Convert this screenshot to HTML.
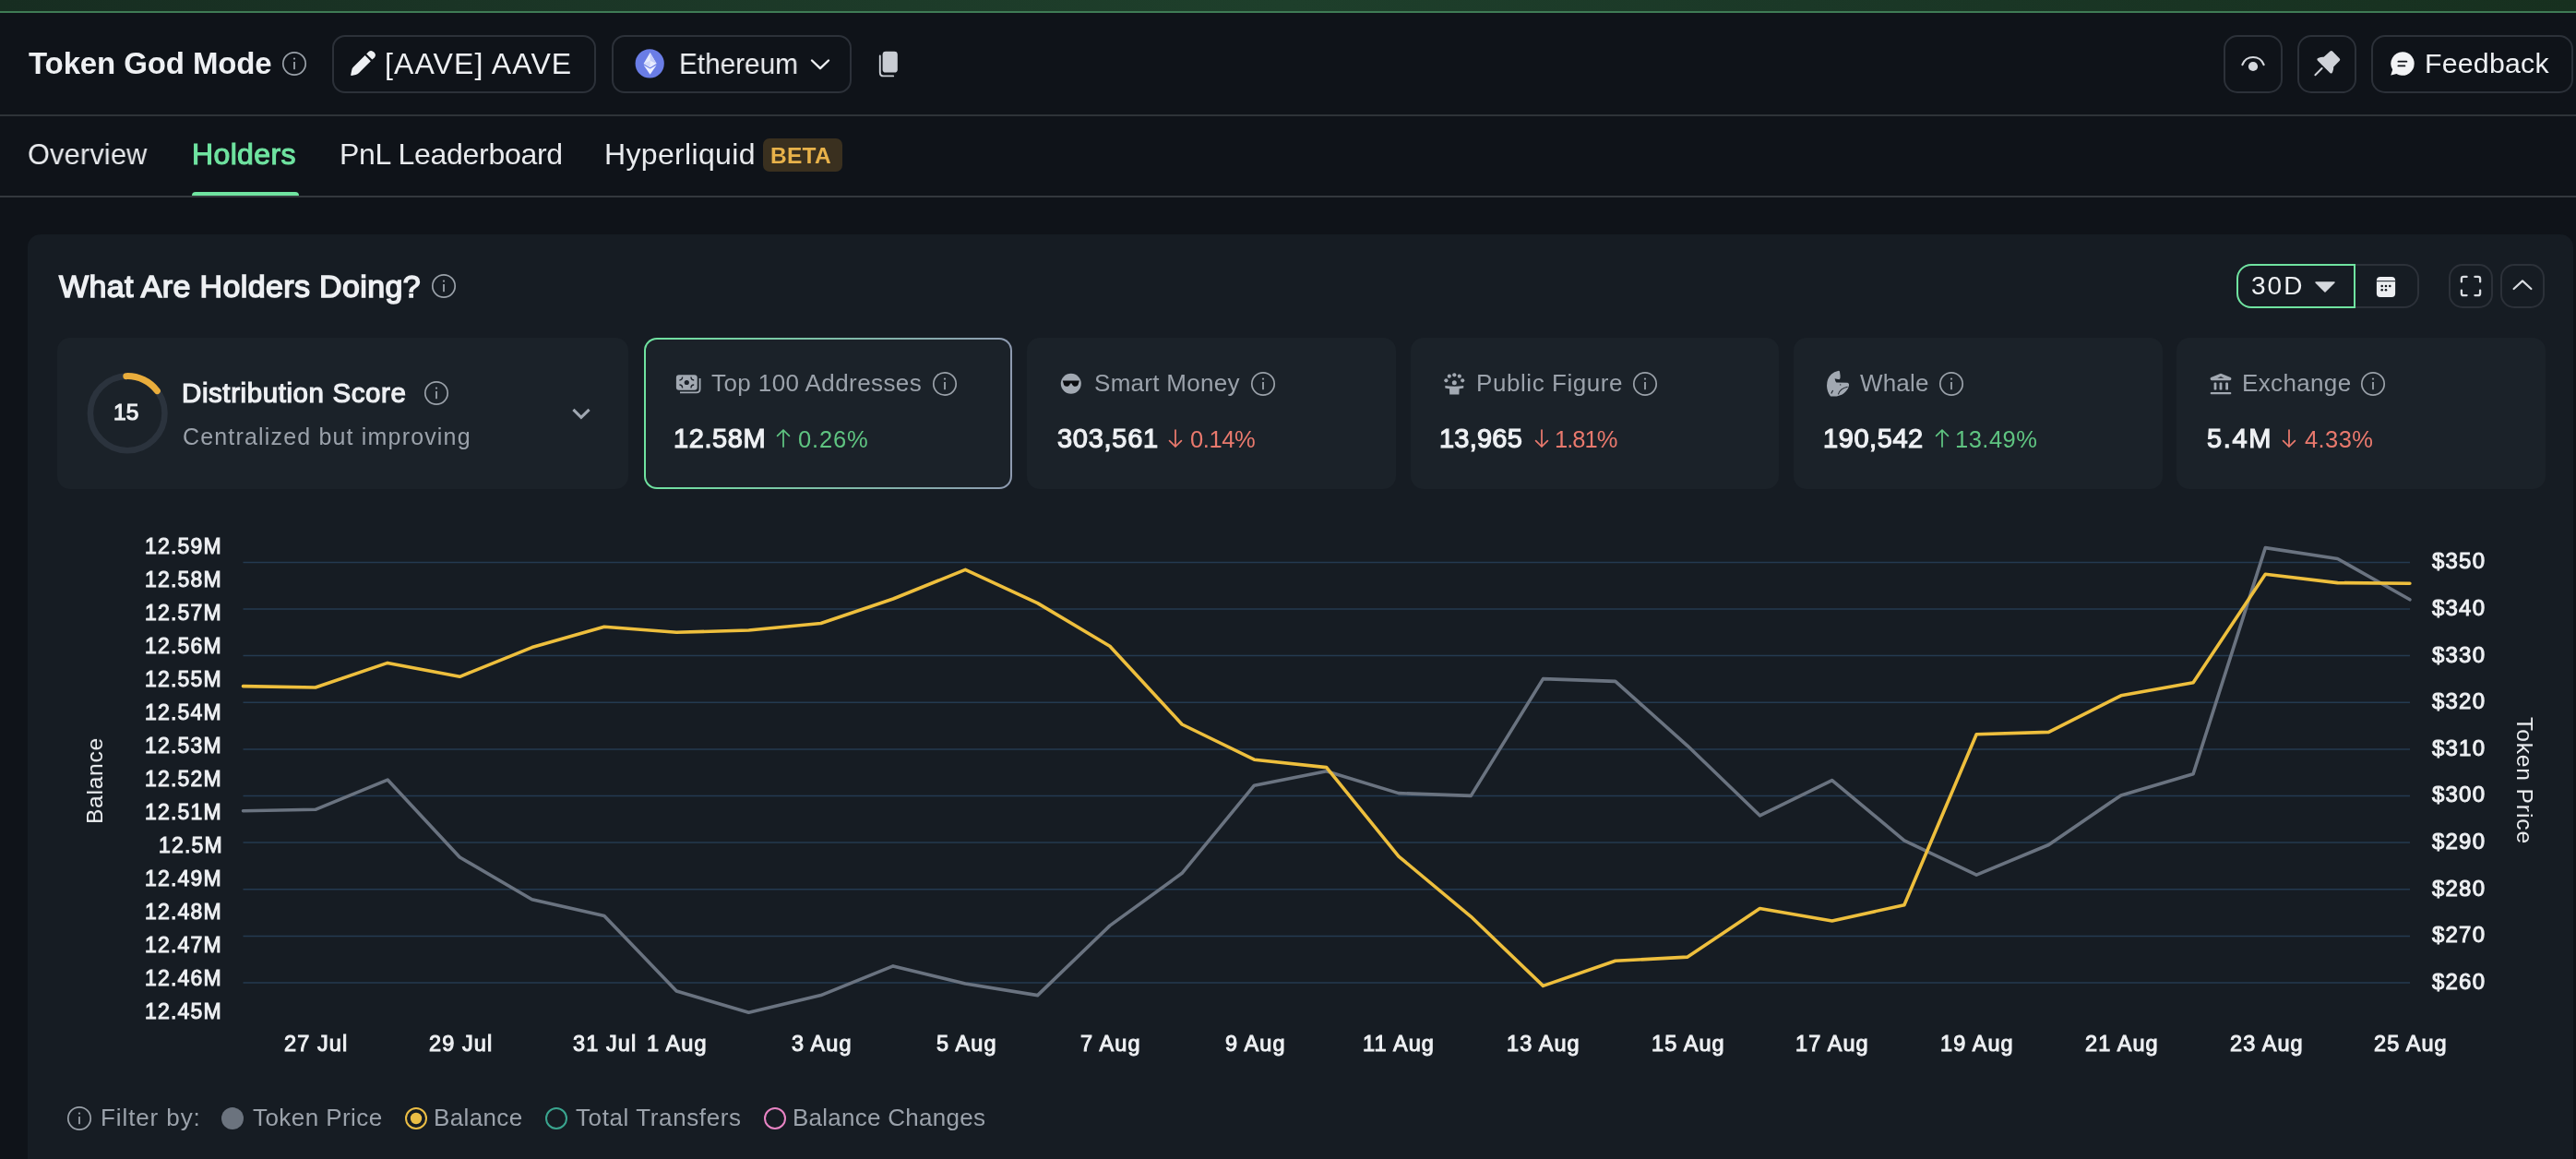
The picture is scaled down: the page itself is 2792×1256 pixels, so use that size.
<!DOCTYPE html>
<html><head><meta charset="utf-8"><title>Token God Mode</title>
<style>
html,body{margin:0;padding:0;}
body{width:2792px;height:1256px;position:relative;overflow:hidden;background:#0f1319;font-family:"Liberation Sans", sans-serif;}
.t{position:absolute;white-space:nowrap;line-height:0;font-family:"Liberation Sans", sans-serif;will-change:transform;}
</style></head><body>
<div style="position:absolute;left:0px;top:0px;width:2792px;height:12px;box-sizing:border-box;background:linear-gradient(90deg,#172d21 0%,#1d3b29 35%,#1e3f2b 50%,#1b3827 70%,#17301f 100%)"></div>
<div style="position:absolute;left:0px;top:12px;width:2792px;height:2px;box-sizing:border-box;background:#3f7b55"></div>
<div class="t" style="left:31.00px;top:68.57px;font-size:33px;font-weight:700;color:#eef0f3;letter-spacing:-0.115px;">Token God Mode</div>
<svg style="position:absolute;left:303.5px;top:53.8px;overflow:visible" width="30" height="30" viewBox="0 0 30 30"><circle cx="15" cy="15" r="12.2" fill="none" stroke="#9aa1a9" stroke-width="1.7"/><rect x="14.1" y="13" width="1.8" height="8.2" fill="#9aa1a9"/><circle cx="15" cy="9.6" r="1.15" fill="#9aa1a9"/></svg>
<div style="position:absolute;left:359.5px;top:37.5px;width:286.0px;height:63.5px;box-sizing:border-box;border:2px solid #2c3139;border-radius:14px"></div>
<svg style="position:absolute;left:370px;top:45px;overflow:visible" width="50" height="50" viewBox="0 0 50 50"><path d="M12.6 28 L25.6 15 L31.8 21.2 L18.8 34.2 Q17.6 35.4 15.6 35.9 L11 36.9 Q10 37.1 10.2 36.1 L11.2 31.2 Q11.6 29 12.6 28 Z" fill="#eef0f3"/><path d="M27.2 13.4 L29.6 11 Q32.4 8.6 35.2 11.4 L35.6 11.8 Q38.2 14.6 35.8 17.4 L33.4 19.6 Z" fill="#eef0f3"/></svg>
<div class="t" style="left:417.00px;top:68.61px;font-size:32px;font-weight:400;color:#eef0f3;letter-spacing:1.130px;">[AAVE] AAVE</div>
<div style="position:absolute;left:662.5px;top:37.5px;width:260.5px;height:63.5px;box-sizing:border-box;border:2px solid #2c3139;border-radius:14px"></div>
<svg style="position:absolute;left:688px;top:53px;overflow:visible" width="32" height="32" viewBox="0 0 32 32"><circle cx="16.2" cy="15.9" r="15.6" fill="#6a7de6"/><path d="M16.6 4.1 L23.6 16 L16.6 20.2 L9.6 16 Z" fill="#e8ecff"/><path d="M16.6 4.1 L23.6 16 L16.6 12.8 Z" fill="#c6cff8"/><path d="M9.6 16 L16.6 12.8 L16.6 20.2 Z" fill="#d2d9fb"/><path d="M9.6 17.5 L16.6 21.6 L23.6 17.5 L16.6 27.8 Z" fill="#eef1ff"/></svg>
<div class="t" style="left:735.74px;top:68.61px;font-size:32px;font-weight:400;color:#eef0f3;letter-spacing:-0.023px;transform:scaleX(0.93);transform-origin:0 0;">Ethereum</div>
<svg style="position:absolute;left:877px;top:62px;overflow:visible" width="24" height="16" viewBox="0 0 24 16"><path d="M3 3.5 L12 12.2 L21 3.5" fill="none" stroke="#eef0f3" stroke-width="2.4" stroke-linecap="round" stroke-linejoin="round"/></svg>
<svg style="position:absolute;left:950px;top:54px;overflow:visible" width="28" height="32" viewBox="0 0 28 32"><rect x="6.6" y="1.8" width="16.2" height="22.8" rx="3.4" fill="#c9cdd4"/><path d="M3.8 6.4 L3.8 24.4 Q3.8 28.4 7.8 28.4 L18.2 28.4" fill="none" stroke="#c9cdd4" stroke-width="1.9" stroke-linecap="round"/></svg>
<div style="position:absolute;left:2410px;top:37.5px;width:64px;height:63.5px;box-sizing:border-box;border:2px solid #2c3139;border-radius:15px"></div>
<svg style="position:absolute;left:2426px;top:53px;overflow:visible" width="32" height="32" viewBox="0 0 32 32"><path d="M4.4 17.2 A12.3 12.3 0 0 1 27.6 17.2" fill="none" stroke="#d5d8dd" stroke-width="2.2" stroke-linecap="round"/><circle cx="16" cy="19" r="5.1" fill="#d5d8dd"/></svg>
<div style="position:absolute;left:2490px;top:37.5px;width:64px;height:63.5px;box-sizing:border-box;border:2px solid #2c3139;border-radius:15px"></div>
<svg style="position:absolute;left:2506px;top:53px;overflow:visible" width="34" height="32" viewBox="0 0 34 32"><path d="M19.6 2.6 Q20.8 1.6 22 2.6 L29.8 10.4 Q30.8 11.6 29.8 12.8 L23.2 19.4 Q23.4 22.4 22.2 25 Q21.4 27.4 19.6 26.2 L5.8 12.4 Q4.6 10.6 7 9.8 Q9.6 8.6 12.6 8.8 Z" fill="#cfd2d8"/><path d="M3.4 28.2 L10.6 21" stroke="#cfd2d8" stroke-width="2" stroke-linecap="round"/></svg>
<div style="position:absolute;left:2570px;top:37.5px;width:218.5px;height:63.5px;box-sizing:border-box;border:2px solid #2c3139;border-radius:15px"></div>
<svg style="position:absolute;left:2588px;top:54px;overflow:visible" width="32" height="32" viewBox="0 0 32 32"><path d="M16 2.2 A12.8 12.8 0 1 1 9.4 26 L3.6 27.6 Q3 27.6 3.4 27 L5.2 21.6 A12.8 12.8 0 0 1 16 2.2 Z" fill="#f2f3f5"/><path d="M11.4 12.7 L20.4 12.7 M11.4 17.4 L18.4 17.4" stroke="#0f1319" stroke-width="1.8" stroke-linecap="round"/></svg>
<div class="t" style="left:2627.50px;top:68.80px;font-size:30.3px;font-weight:400;color:#eef0f3;letter-spacing:0.214px;">Feedback</div>
<div style="position:absolute;left:0px;top:124px;width:2792px;height:2px;box-sizing:border-box;background:#2e3338"></div>
<div class="t" style="left:30.04px;top:167.31px;font-size:32px;font-weight:400;color:#e9ebee;letter-spacing:0.196px;transform:scaleX(0.96);transform-origin:0 0;">Overview</div>
<div class="t" style="left:207.80px;top:167.31px;font-size:32px;font-weight:400;color:#6fe3a0;letter-spacing:0.367px;-webkit-text-stroke:1.1px #6fe3a0;">Holders</div>
<div style="position:absolute;left:208px;top:207.5px;width:115.5px;height:5.5px;box-sizing:border-box;background:#6fe3a0;border-radius:4px 4px 0 0"></div>
<div class="t" style="left:367.70px;top:167.31px;font-size:32px;font-weight:400;color:#e9ebee;letter-spacing:-0.286px;">PnL Leaderboard</div>
<div class="t" style="left:655.00px;top:167.31px;font-size:32px;font-weight:400;color:#e9ebee;letter-spacing:0.340px;">Hyperliquid</div>
<div style="position:absolute;left:826.5px;top:150px;width:86.0px;height:36px;box-sizing:border-box;background:#3a301f;border-radius:7px"></div>
<div class="t" style="left:834.80px;top:169.01px;font-size:24.5px;font-weight:700;color:#e8b24a;letter-spacing:0.267px;">BETA</div>
<div style="position:absolute;left:0px;top:212px;width:2792px;height:2px;box-sizing:border-box;background:#33383d"></div>
<div style="position:absolute;left:29.5px;top:253.5px;width:2759.5px;height:1042.5px;box-sizing:border-box;background:#161c23;border-radius:14px"></div>
<div class="t" style="left:64.00px;top:309.72px;font-size:34px;font-weight:400;color:#eef0f3;letter-spacing:0.364px;-webkit-text-stroke:1.5px #eef0f3;">What Are Holders Doing?</div>
<svg style="position:absolute;left:466px;top:295px;overflow:visible" width="30" height="30" viewBox="0 0 30 30"><circle cx="15" cy="15" r="12.2" fill="none" stroke="#9aa1a9" stroke-width="1.7"/><rect x="14.1" y="13" width="1.8" height="8.2" fill="#9aa1a9"/><circle cx="15" cy="9.6" r="1.15" fill="#9aa1a9"/></svg>
<div style="position:absolute;left:2424px;top:286px;width:197.5px;height:48px;box-sizing:border-box;border:2px solid #2c3139;border-radius:16px"></div>
<div style="position:absolute;left:2424px;top:286px;width:128.5px;height:48px;box-sizing:border-box;border:2.4px solid #6fe3a0;border-radius:16px 0 0 16px"></div>
<div class="t" style="left:2440.40px;top:309.70px;font-size:28px;font-weight:400;color:#eef0f3;letter-spacing:2.000px;">30D</div>
<svg style="position:absolute;left:2508px;top:304px;overflow:visible" width="24" height="14" viewBox="0 0 24 14"><path d="M2 2 L22 2 L12 12 Z" fill="#d5d8dd" stroke="#d5d8dd" stroke-width="1.5" stroke-linejoin="round"/></svg>
<svg style="position:absolute;left:2574px;top:298px;overflow:visible" width="24" height="24" viewBox="0 0 24 24"><rect x="1.9" y="2" width="20.2" height="21.9" rx="4" fill="#eceef1"/><rect x="1.9" y="6" width="20.2" height="1.2" fill="#3a4047"/><circle cx="7.7" cy="12" r="1.3" fill="#14181d"/><circle cx="12" cy="12" r="1.3" fill="#14181d"/><circle cx="16.3" cy="12" r="1.3" fill="#14181d"/><circle cx="7.7" cy="16.2" r="1.3" fill="#14181d"/><circle cx="12" cy="16.2" r="1.3" fill="#14181d"/></svg>
<div style="position:absolute;left:2654px;top:286px;width:48px;height:48px;box-sizing:border-box;border:2px solid #2c3139;border-radius:15px"></div>
<svg style="position:absolute;left:2664px;top:296px;overflow:visible" width="28" height="28" viewBox="0 0 28 28"><path d="M3.9 9.4 L3.9 6.1 Q3.9 3.9 6.1 3.9 L9.6 3.9 M18.4 3.9 L21.9 3.9 Q24.1 3.9 24.1 6.1 L24.1 9.4 M24.1 18.6 L24.1 21.9 Q24.1 24.1 21.9 24.1 L18.4 24.1 M9.6 24.1 L6.1 24.1 Q3.9 24.1 3.9 21.9 L3.9 18.6" fill="none" stroke="#d9dce1" stroke-width="2.3" stroke-linecap="round"/></svg>
<div style="position:absolute;left:2710px;top:286px;width:48px;height:48px;box-sizing:border-box;border:2px solid #2c3139;border-radius:15px"></div>
<svg style="position:absolute;left:2720px;top:296px;overflow:visible" width="28" height="28" viewBox="0 0 28 28"><path d="M4.6 17 L14 8.4 L23.4 17" fill="none" stroke="#d9dce1" stroke-width="2.2" stroke-linecap="round" stroke-linejoin="round"/></svg>
<div style="position:absolute;left:61.5px;top:365.5px;width:619.5px;height:164.5px;box-sizing:border-box;background:#1b2229;border-radius:14px"></div>
<svg style="position:absolute;left:90px;top:400px;overflow:visible" width="96" height="96" viewBox="0 0 96 96"><circle cx="48.2" cy="47.9" r="40.3" fill="none" stroke="#2b333d" stroke-width="6.6"/><path d="M46.8 7.63 A40.3 40.3 0 0 1 80.4 23.65" fill="none" stroke="#e9ad3c" stroke-width="7" stroke-linecap="round"/></svg>
<div class="t" style="left:123.40px;top:447.21px;font-size:24.5px;font-weight:400;color:#eef0f3;letter-spacing:0.200px;-webkit-text-stroke:1.1px #eef0f3;">15</div>
<div class="t" style="left:196.90px;top:425.58px;font-size:29.5px;font-weight:400;color:#eef0f3;letter-spacing:0.588px;-webkit-text-stroke:1.2px #eef0f3;">Distribution Score</div>
<svg style="position:absolute;left:457.5px;top:410.9px;overflow:visible" width="30" height="30" viewBox="0 0 30 30"><circle cx="15" cy="15" r="12.2" fill="none" stroke="#9aa1a9" stroke-width="1.7"/><rect x="14.1" y="13" width="1.8" height="8.2" fill="#9aa1a9"/><circle cx="15" cy="9.6" r="1.15" fill="#9aa1a9"/></svg>
<div class="t" style="left:197.90px;top:473.04px;font-size:25px;font-weight:400;color:#9ba2ab;letter-spacing:1.171px;">Centralized but improving</div>
<svg style="position:absolute;left:618px;top:440px;overflow:visible" width="24" height="16" viewBox="0 0 24 16"><path d="M3.4 3.8 L11.9 12.4 L20.6 3.8" fill="none" stroke="#9fa7b1" stroke-width="3.1" stroke-linecap="butt" stroke-linejoin="miter"/></svg>
<div style="position:absolute;left:698px;top:365.5px;width:399px;height:164.5px;box-sizing:border-box;border-radius:14px;padding:2px;background:linear-gradient(90deg,#6fe3a0,#8e9ab0)"><div style="width:100%;height:100%;border-radius:12px;background:#1b2229"></div></div>
<div style="position:absolute;left:1113px;top:365.5px;width:399.5px;height:164.5px;box-sizing:border-box;background:#1b2229;border-radius:14px"></div>
<div style="position:absolute;left:1528.5px;top:365.5px;width:399.5px;height:164.5px;box-sizing:border-box;background:#1b2229;border-radius:14px"></div>
<div style="position:absolute;left:1944px;top:365.5px;width:399.5px;height:164.5px;box-sizing:border-box;background:#1b2229;border-radius:14px"></div>
<div style="position:absolute;left:2358.5px;top:365.5px;width:400.0px;height:164.5px;box-sizing:border-box;background:#1b2229;border-radius:14px"></div>
<svg style="position:absolute;left:731px;top:403px;overflow:visible" width="30" height="26" viewBox="0 0 30 26"><rect x="1.9" y="3.2" width="22.8" height="16.6" rx="3" fill="#a2a9b2"/><path d="M6 22.4 L23.8 22.4 Q27.6 22.4 27.6 18.6 L27.6 7" fill="none" stroke="#a2a9b2" stroke-width="1.8"/><circle cx="13.3" cy="11.5" r="2.6" fill="#1b2129"/><path d="M5.4 9 Q8.6 9 8.6 5.6 M18 5.6 Q18 9 21.2 9 M5.4 14 Q8.6 14 8.6 17.4 M18 17.4 Q18 14 21.2 14" fill="none" stroke="#1b2129" stroke-width="1.4"/></svg>
<div class="t" style="left:771.20px;top:415.19px;font-size:26px;font-weight:400;color:#9ba2ab;letter-spacing:0.412px;">Top 100 Addresses</div>
<svg style="position:absolute;left:1009px;top:400.5px;overflow:visible" width="30" height="30" viewBox="0 0 30 30"><circle cx="15" cy="15" r="12.2" fill="none" stroke="#9aa1a9" stroke-width="1.7"/><rect x="14.1" y="13" width="1.8" height="8.2" fill="#9aa1a9"/><circle cx="15" cy="9.6" r="1.15" fill="#9aa1a9"/></svg>
<div class="t" style="left:729.70px;top:475.35px;font-size:29px;font-weight:400;color:#eef0f3;letter-spacing:0.580px;-webkit-text-stroke:1.2px #eef0f3;">12.58M</div>
<div class="t" style="left:865.00px;top:475.66px;font-size:25.5px;font-weight:400;color:#5fc481;letter-spacing:0.825px;">0.26%</div>
<svg style="position:absolute;left:1148px;top:403px;overflow:visible" width="26" height="26" viewBox="0 0 26 26"><circle cx="12.8" cy="12.7" r="11" fill="#a2a9b2"/><path d="M3.8 9.6 L21.8 9.6 L20.9 12.8 Q20.4 15.8 17.6 15.8 Q14.6 15.8 13.6 12.4 L12 12.4 Q11 15.8 8 15.8 Q5.2 15.8 4.7 12.8 Z" fill="#0b0d10"/></svg>
<div class="t" style="left:1185.50px;top:415.19px;font-size:26px;font-weight:400;color:#9ba2ab;letter-spacing:0.300px;">Smart Money</div>
<svg style="position:absolute;left:1354px;top:400.5px;overflow:visible" width="30" height="30" viewBox="0 0 30 30"><circle cx="15" cy="15" r="12.2" fill="none" stroke="#9aa1a9" stroke-width="1.7"/><rect x="14.1" y="13" width="1.8" height="8.2" fill="#9aa1a9"/><circle cx="15" cy="9.6" r="1.15" fill="#9aa1a9"/></svg>
<div class="t" style="left:1146.20px;top:475.35px;font-size:29px;font-weight:400;color:#eef0f3;letter-spacing:0.717px;-webkit-text-stroke:1.2px #eef0f3;">303,561</div>
<div class="t" style="left:1289.70px;top:475.66px;font-size:25.5px;font-weight:400;color:#e9796d;letter-spacing:-0.425px;">0.14%</div>
<svg style="position:absolute;left:1563.8px;top:403.2px;overflow:visible" width="26" height="26" viewBox="0 0 26 26"><circle cx="3.4" cy="9.3" r="2.1" fill="#a2a9b2"/><circle cx="6.8" cy="4.7" r="2.1" fill="#a2a9b2"/><circle cx="12.3" cy="3.3" r="2.1" fill="#a2a9b2"/><circle cx="17.8" cy="4.7" r="2.1" fill="#a2a9b2"/><circle cx="21.2" cy="9.3" r="2.1" fill="#a2a9b2"/><circle cx="12.3" cy="11.7" r="2.5" fill="#a2a9b2"/><path d="M2.4 14.9 Q12.3 16.4 22.2 14.9 L22.3 17.6 Q19.6 18.4 17.6 18.3 L17.4 24.4 L7.2 24.4 L7 18.3 Q5 18.4 2.3 17.6 Z" fill="#a2a9b2"/></svg>
<div class="t" style="left:1599.60px;top:415.19px;font-size:26px;font-weight:400;color:#9ba2ab;letter-spacing:0.567px;">Public Figure</div>
<svg style="position:absolute;left:1768px;top:400.5px;overflow:visible" width="30" height="30" viewBox="0 0 30 30"><circle cx="15" cy="15" r="12.2" fill="none" stroke="#9aa1a9" stroke-width="1.7"/><rect x="14.1" y="13" width="1.8" height="8.2" fill="#9aa1a9"/><circle cx="15" cy="9.6" r="1.15" fill="#9aa1a9"/></svg>
<div class="t" style="left:1560.40px;top:475.35px;font-size:29px;font-weight:400;color:#eef0f3;letter-spacing:0.220px;-webkit-text-stroke:1.2px #eef0f3;">13,965</div>
<div class="t" style="left:1684.80px;top:475.66px;font-size:25.5px;font-weight:400;color:#e9796d;letter-spacing:-1.000px;">1.81%</div>
<svg style="position:absolute;left:1970px;top:395px;overflow:visible" width="50" height="40" viewBox="0 0 50 40"><path d="M22.1 6.9 Q23.8 6.5 24 8 L24.6 12.2 Q25 15 23.4 16.2 L18.6 15.2 Q19.2 18.6 20.3 19.6 L32 19.8 Q34.4 20.2 34 22.8 Q33.4 26.5 31 28.8 Q27.4 33.2 20.7 34.5 L14.1 34.6 Q10.2 30 10 23 Q10 15 15 10.5 Q18 7.8 22.1 6.9 Z" fill="#a2a9b2"/><path d="M22.4 32.4 Q24.2 25.8 32.6 24.2 M14.8 31.6 L16.6 28" fill="none" stroke="#1b2129" stroke-width="1.1"/><circle cx="24.7" cy="21.9" r="0.7" fill="#1b2129"/></svg>
<div class="t" style="left:2016.30px;top:415.19px;font-size:26px;font-weight:400;color:#9ba2ab;letter-spacing:0.175px;">Whale</div>
<svg style="position:absolute;left:2100px;top:400.5px;overflow:visible" width="30" height="30" viewBox="0 0 30 30"><circle cx="15" cy="15" r="12.2" fill="none" stroke="#9aa1a9" stroke-width="1.7"/><rect x="14.1" y="13" width="1.8" height="8.2" fill="#9aa1a9"/><circle cx="15" cy="9.6" r="1.15" fill="#9aa1a9"/></svg>
<div class="t" style="left:1975.90px;top:475.35px;font-size:29px;font-weight:400;color:#eef0f3;letter-spacing:0.567px;-webkit-text-stroke:1.2px #eef0f3;">190,542</div>
<div class="t" style="left:2119.40px;top:475.66px;font-size:25.5px;font-weight:400;color:#5fc481;letter-spacing:0.480px;">13.49%</div>
<svg style="position:absolute;left:2393px;top:402px;overflow:visible" width="28" height="28" viewBox="0 0 28 28"><path d="M2.6 8.6 Q2.4 7.6 3.4 7.1 L13.2 3 Q14 2.7 14.8 3 L24.6 7.1 Q25.6 7.6 25.4 8.6 Q25.2 10.2 24 10.2 L4 10.2 Q2.8 10.2 2.6 8.6 Z" fill="#a2a9b2"/><path d="M10.4 7.8 L14 6 L17.6 7.8 Z" fill="#1b2129"/><rect x="6.6" y="12.4" width="2.8" height="8.2" rx="1.2" fill="#a2a9b2"/><rect x="12.6" y="12.4" width="2.8" height="8.2" rx="1.2" fill="#a2a9b2"/><rect x="19.2" y="12.4" width="2.8" height="8.2" rx="1.2" fill="#a2a9b2"/><rect x="2.7" y="22.9" width="22.6" height="2.3" rx="1" fill="#a2a9b2"/></svg>
<div class="t" style="left:2430.00px;top:415.19px;font-size:26px;font-weight:400;color:#9ba2ab;letter-spacing:0.357px;">Exchange</div>
<svg style="position:absolute;left:2557px;top:400.5px;overflow:visible" width="30" height="30" viewBox="0 0 30 30"><circle cx="15" cy="15" r="12.2" fill="none" stroke="#9aa1a9" stroke-width="1.7"/><rect x="14.1" y="13" width="1.8" height="8.2" fill="#9aa1a9"/><circle cx="15" cy="9.6" r="1.15" fill="#9aa1a9"/></svg>
<div class="t" style="left:2391.80px;top:475.35px;font-size:29px;font-weight:400;color:#eef0f3;letter-spacing:1.667px;-webkit-text-stroke:1.2px #eef0f3;">5.4M</div>
<div class="t" style="left:2498.30px;top:475.66px;font-size:25.5px;font-weight:400;color:#e9796d;letter-spacing:0.400px;">4.33%</div>
<svg style="position:absolute;left:840.2px;top:463.0px;overflow:visible" width="18" height="24" viewBox="0 0 18 24"><path d="M9 21 L9 3 M2.6 9.4 L9 3 L15.4 9.4" fill="none" stroke="#5fc481" stroke-width="1.75" stroke-linecap="round" stroke-linejoin="round"/></svg>
<svg style="position:absolute;left:1264.8px;top:463.0px;overflow:visible" width="18" height="24" viewBox="0 0 18 24"><path d="M9 3 L9 21 M2.6 14.6 L9 21 L15.4 14.6" fill="none" stroke="#e9796d" stroke-width="1.75" stroke-linecap="round" stroke-linejoin="round"/></svg>
<svg style="position:absolute;left:1661.5px;top:463.0px;overflow:visible" width="18" height="24" viewBox="0 0 18 24"><path d="M9 3 L9 21 M2.6 14.6 L9 21 L15.4 14.6" fill="none" stroke="#e9796d" stroke-width="1.75" stroke-linecap="round" stroke-linejoin="round"/></svg>
<svg style="position:absolute;left:2096.2px;top:463.0px;overflow:visible" width="18" height="24" viewBox="0 0 18 24"><path d="M9 21 L9 3 M2.6 9.4 L9 3 L15.4 9.4" fill="none" stroke="#5fc481" stroke-width="1.75" stroke-linecap="round" stroke-linejoin="round"/></svg>
<svg style="position:absolute;left:2471.8px;top:463.0px;overflow:visible" width="18" height="24" viewBox="0 0 18 24"><path d="M9 3 L9 21 M2.6 14.6 L9 21 L15.4 14.6" fill="none" stroke="#e9796d" stroke-width="1.75" stroke-linecap="round" stroke-linejoin="round"/></svg>
<svg style="position:absolute;left:0;top:0" width="2792" height="1256"><line x1="263.5" y1="609.4" x2="2612" y2="609.4" stroke="#243a51" stroke-width="1.5"/><line x1="263.5" y1="660.0" x2="2612" y2="660.0" stroke="#243a51" stroke-width="1.5"/><line x1="263.5" y1="710.6" x2="2612" y2="710.6" stroke="#243a51" stroke-width="1.5"/><line x1="263.5" y1="761.3" x2="2612" y2="761.3" stroke="#243a51" stroke-width="1.5"/><line x1="263.5" y1="811.9" x2="2612" y2="811.9" stroke="#243a51" stroke-width="1.5"/><line x1="263.5" y1="862.5" x2="2612" y2="862.5" stroke="#243a51" stroke-width="1.5"/><line x1="263.5" y1="913.1" x2="2612" y2="913.1" stroke="#243a51" stroke-width="1.5"/><line x1="263.5" y1="963.7" x2="2612" y2="963.7" stroke="#243a51" stroke-width="1.5"/><line x1="263.5" y1="1014.4" x2="2612" y2="1014.4" stroke="#243a51" stroke-width="1.5"/><line x1="263.5" y1="1065.0" x2="2612" y2="1065.0" stroke="#243a51" stroke-width="1.5"/><polyline points="263.5,878.7 341.8,877.3 420.1,845.1 498.3,929.0 576.6,974.7 654.9,992.4 733.2,1074.0 811.5,1097.2 889.7,1078.6 968.0,1046.9 1046.3,1066.0 1124.6,1078.6 1202.9,1003.1 1281.1,946.3 1359.4,851.2 1437.7,835.8 1516.0,859.6 1594.3,862.4 1672.5,735.6 1750.8,738.4 1829.1,808.3 1907.4,883.8 1985.7,845.6 2063.9,910.8 2142.2,948.1 2220.5,915.5 2298.8,861.9 2377.1,838.8 2455.3,593.6 2533.6,605.5 2611.9,649.8" fill="none" stroke="#6a7380" stroke-width="3.6" stroke-linejoin="round" stroke-linecap="round"/><polyline points="263.5,743.6 341.8,745.0 420.1,718.4 498.3,733.3 576.6,701.6 654.9,679.3 733.2,685.3 811.5,683.0 889.7,675.5 968.0,649.0 1046.3,617.3 1124.6,653.6 1202.9,700.2 1281.1,785.0 1359.4,823.2 1437.7,831.6 1516.0,928.1 1594.3,993.3 1672.5,1068.4 1750.8,1041.3 1829.1,1037.1 1907.4,984.5 1985.7,998.0 2063.9,980.7 2142.2,795.8 2220.5,793.4 2298.8,753.8 2377.1,739.7 2455.3,622.3 2533.6,631.6 2611.9,632.3" fill="none" stroke="#eebf3d" stroke-width="3.6" stroke-linejoin="round" stroke-linecap="round"/></svg>
<div class="t" style="left:157.30px;top:592.43px;font-size:23px;font-weight:400;color:#eef0f3;letter-spacing:1.200px;-webkit-text-stroke:1.0px #eef0f3;">12.59M</div>
<div class="t" style="left:157.30px;top:628.43px;font-size:23px;font-weight:400;color:#eef0f3;letter-spacing:1.200px;-webkit-text-stroke:1.0px #eef0f3;">12.58M</div>
<div class="t" style="left:157.30px;top:664.43px;font-size:23px;font-weight:400;color:#eef0f3;letter-spacing:1.200px;-webkit-text-stroke:1.0px #eef0f3;">12.57M</div>
<div class="t" style="left:157.30px;top:700.43px;font-size:23px;font-weight:400;color:#eef0f3;letter-spacing:1.200px;-webkit-text-stroke:1.0px #eef0f3;">12.56M</div>
<div class="t" style="left:157.30px;top:736.43px;font-size:23px;font-weight:400;color:#eef0f3;letter-spacing:1.200px;-webkit-text-stroke:1.0px #eef0f3;">12.55M</div>
<div class="t" style="left:157.30px;top:772.43px;font-size:23px;font-weight:400;color:#eef0f3;letter-spacing:1.200px;-webkit-text-stroke:1.0px #eef0f3;">12.54M</div>
<div class="t" style="left:157.30px;top:808.43px;font-size:23px;font-weight:400;color:#eef0f3;letter-spacing:1.200px;-webkit-text-stroke:1.0px #eef0f3;">12.53M</div>
<div class="t" style="left:157.30px;top:844.43px;font-size:23px;font-weight:400;color:#eef0f3;letter-spacing:1.200px;-webkit-text-stroke:1.0px #eef0f3;">12.52M</div>
<div class="t" style="left:157.30px;top:880.43px;font-size:23px;font-weight:400;color:#eef0f3;letter-spacing:1.200px;-webkit-text-stroke:1.0px #eef0f3;">12.51M</div>
<div class="t" style="left:171.50px;top:916.43px;font-size:23px;font-weight:400;color:#eef0f3;letter-spacing:1.200px;-webkit-text-stroke:1.0px #eef0f3;">12.5M</div>
<div class="t" style="left:157.30px;top:952.43px;font-size:23px;font-weight:400;color:#eef0f3;letter-spacing:1.200px;-webkit-text-stroke:1.0px #eef0f3;">12.49M</div>
<div class="t" style="left:157.30px;top:988.43px;font-size:23px;font-weight:400;color:#eef0f3;letter-spacing:1.200px;-webkit-text-stroke:1.0px #eef0f3;">12.48M</div>
<div class="t" style="left:157.30px;top:1024.43px;font-size:23px;font-weight:400;color:#eef0f3;letter-spacing:1.200px;-webkit-text-stroke:1.0px #eef0f3;">12.47M</div>
<div class="t" style="left:157.30px;top:1060.43px;font-size:23px;font-weight:400;color:#eef0f3;letter-spacing:1.200px;-webkit-text-stroke:1.0px #eef0f3;">12.46M</div>
<div class="t" style="left:157.30px;top:1096.43px;font-size:23px;font-weight:400;color:#eef0f3;letter-spacing:1.200px;-webkit-text-stroke:1.0px #eef0f3;">12.45M</div>
<div class="t" style="left:2635.50px;top:608.28px;font-size:24px;font-weight:400;color:#eef0f3;letter-spacing:1.200px;-webkit-text-stroke:1.0px #eef0f3;">$350</div>
<div class="t" style="left:2635.50px;top:658.90px;font-size:24px;font-weight:400;color:#eef0f3;letter-spacing:1.200px;-webkit-text-stroke:1.0px #eef0f3;">$340</div>
<div class="t" style="left:2635.50px;top:709.52px;font-size:24px;font-weight:400;color:#eef0f3;letter-spacing:1.200px;-webkit-text-stroke:1.0px #eef0f3;">$330</div>
<div class="t" style="left:2635.50px;top:760.14px;font-size:24px;font-weight:400;color:#eef0f3;letter-spacing:1.200px;-webkit-text-stroke:1.0px #eef0f3;">$320</div>
<div class="t" style="left:2635.50px;top:810.76px;font-size:24px;font-weight:400;color:#eef0f3;letter-spacing:1.200px;-webkit-text-stroke:1.0px #eef0f3;">$310</div>
<div class="t" style="left:2635.50px;top:861.38px;font-size:24px;font-weight:400;color:#eef0f3;letter-spacing:1.200px;-webkit-text-stroke:1.0px #eef0f3;">$300</div>
<div class="t" style="left:2635.50px;top:912.00px;font-size:24px;font-weight:400;color:#eef0f3;letter-spacing:1.200px;-webkit-text-stroke:1.0px #eef0f3;">$290</div>
<div class="t" style="left:2635.50px;top:962.62px;font-size:24px;font-weight:400;color:#eef0f3;letter-spacing:1.200px;-webkit-text-stroke:1.0px #eef0f3;">$280</div>
<div class="t" style="left:2635.50px;top:1013.24px;font-size:24px;font-weight:400;color:#eef0f3;letter-spacing:1.200px;-webkit-text-stroke:1.0px #eef0f3;">$270</div>
<div class="t" style="left:2635.50px;top:1063.86px;font-size:24px;font-weight:400;color:#eef0f3;letter-spacing:1.200px;-webkit-text-stroke:1.0px #eef0f3;">$260</div>
<div class="t" style="left:103px;top:846px;font-size:24.5px;font-weight:400;color:#eef0f3;letter-spacing:0.75px;line-height:0;transform:translate(-50%,0) rotate(-90deg);transform-origin:50% 0">Balance</div>
<div class="t" style="left:2735.5px;top:846px;font-size:24.5px;font-weight:400;color:#eef0f3;letter-spacing:0.9px;line-height:0;transform:translate(-50%,0) rotate(90deg);transform-origin:50% 0">Token Price</div>
<div class="t" style="left:308.03px;top:1131.26px;font-size:23.5px;font-weight:400;color:#eef0f3;letter-spacing:1.100px;-webkit-text-stroke:1.0px #eef0f3;">27 Jul</div>
<div class="t" style="left:464.59px;top:1131.26px;font-size:23.5px;font-weight:400;color:#eef0f3;letter-spacing:1.100px;-webkit-text-stroke:1.0px #eef0f3;">29 Jul</div>
<div class="t" style="left:621.15px;top:1131.26px;font-size:23.5px;font-weight:400;color:#eef0f3;letter-spacing:1.100px;-webkit-text-stroke:1.0px #eef0f3;">31 Jul</div>
<div class="t" style="left:700.98px;top:1131.26px;font-size:23.5px;font-weight:400;color:#eef0f3;letter-spacing:1.100px;-webkit-text-stroke:1.0px #eef0f3;">1 Aug</div>
<div class="t" style="left:858.04px;top:1131.26px;font-size:23.5px;font-weight:400;color:#eef0f3;letter-spacing:1.100px;-webkit-text-stroke:1.0px #eef0f3;">3 Aug</div>
<div class="t" style="left:1014.60px;top:1131.26px;font-size:23.5px;font-weight:400;color:#eef0f3;letter-spacing:1.100px;-webkit-text-stroke:1.0px #eef0f3;">5 Aug</div>
<div class="t" style="left:1171.16px;top:1131.26px;font-size:23.5px;font-weight:400;color:#eef0f3;letter-spacing:1.100px;-webkit-text-stroke:1.0px #eef0f3;">7 Aug</div>
<div class="t" style="left:1327.72px;top:1131.26px;font-size:23.5px;font-weight:400;color:#eef0f3;letter-spacing:1.100px;-webkit-text-stroke:1.0px #eef0f3;">9 Aug</div>
<div class="t" style="left:1477.23px;top:1131.26px;font-size:23.5px;font-weight:400;color:#eef0f3;letter-spacing:1.100px;-webkit-text-stroke:1.0px #eef0f3;">11 Aug</div>
<div class="t" style="left:1633.29px;top:1131.26px;font-size:23.5px;font-weight:400;color:#eef0f3;letter-spacing:1.100px;-webkit-text-stroke:1.0px #eef0f3;">13 Aug</div>
<div class="t" style="left:1789.85px;top:1131.26px;font-size:23.5px;font-weight:400;color:#eef0f3;letter-spacing:1.100px;-webkit-text-stroke:1.0px #eef0f3;">15 Aug</div>
<div class="t" style="left:1946.41px;top:1131.26px;font-size:23.5px;font-weight:400;color:#eef0f3;letter-spacing:1.100px;-webkit-text-stroke:1.0px #eef0f3;">17 Aug</div>
<div class="t" style="left:2102.97px;top:1131.26px;font-size:23.5px;font-weight:400;color:#eef0f3;letter-spacing:1.100px;-webkit-text-stroke:1.0px #eef0f3;">19 Aug</div>
<div class="t" style="left:2260.03px;top:1131.26px;font-size:23.5px;font-weight:400;color:#eef0f3;letter-spacing:1.100px;-webkit-text-stroke:1.0px #eef0f3;">21 Aug</div>
<div class="t" style="left:2416.59px;top:1131.26px;font-size:23.5px;font-weight:400;color:#eef0f3;letter-spacing:1.100px;-webkit-text-stroke:1.0px #eef0f3;">23 Aug</div>
<div class="t" style="left:2573.15px;top:1131.26px;font-size:23.5px;font-weight:400;color:#eef0f3;letter-spacing:1.100px;-webkit-text-stroke:1.0px #eef0f3;">25 Aug</div>
<svg style="position:absolute;left:71px;top:1197px;overflow:visible" width="30" height="30" viewBox="0 0 30 30"><circle cx="15" cy="15" r="12.2" fill="none" stroke="#9aa1a9" stroke-width="1.7"/><rect x="14.1" y="13" width="1.8" height="8.2" fill="#9aa1a9"/><circle cx="15" cy="9.6" r="1.15" fill="#9aa1a9"/></svg>
<div class="t" style="left:108.60px;top:1210.99px;font-size:26px;font-weight:400;color:#9ba2ab;letter-spacing:0.900px;">Filter by:</div>
<svg style="position:absolute;left:238px;top:1198px;overflow:visible" width="28" height="28" viewBox="0 0 28 28"><circle cx="14" cy="14" r="12" fill="#6b737e"/></svg>
<div class="t" style="left:273.70px;top:1210.99px;font-size:26px;font-weight:400;color:#9ba2ab;letter-spacing:0.440px;">Token Price</div>
<svg style="position:absolute;left:437px;top:1198px;overflow:visible" width="28" height="28" viewBox="0 0 28 28"><circle cx="14" cy="14" r="11" fill="none" stroke="#eabd45" stroke-width="2"/><circle cx="14" cy="14" r="6.2" fill="#eabd45"/></svg>
<div class="t" style="left:469.50px;top:1210.99px;font-size:26px;font-weight:400;color:#9ba2ab;letter-spacing:0.367px;">Balance</div>
<svg style="position:absolute;left:589px;top:1198px;overflow:visible" width="28" height="28" viewBox="0 0 28 28"><circle cx="14" cy="14" r="11" fill="none" stroke="#3aa58f" stroke-width="2"/></svg>
<div class="t" style="left:623.70px;top:1210.99px;font-size:26px;font-weight:400;color:#9ba2ab;letter-spacing:0.607px;">Total Transfers</div>
<svg style="position:absolute;left:826px;top:1198px;overflow:visible" width="28" height="28" viewBox="0 0 28 28"><circle cx="14" cy="14" r="11" fill="none" stroke="#e884c4" stroke-width="2"/></svg>
<div class="t" style="left:859.10px;top:1210.99px;font-size:26px;font-weight:400;color:#9ba2ab;letter-spacing:0.264px;">Balance Changes</div>
</body></html>
